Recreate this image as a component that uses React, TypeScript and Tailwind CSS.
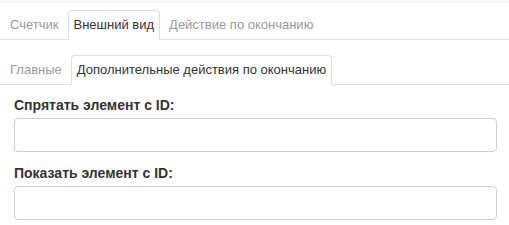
import { useState } from "react";

type Tab = { id: string; label: string };

const mainTabs: Tab[] = [
  { id: "counter", label: "Счетчик" },
  { id: "look", label: "Внешний вид" },
  { id: "finish", label: "Действие по окончанию" },
];

const subTabs: Tab[] = [
  { id: "main", label: "Главные" },
  { id: "extra", label: "Дополнительные действия по окончанию" },
];

function Tabs({
  tabs,
  active,
  onChange,
}: {
  tabs: Tab[];
  active: string;
  onChange: (id: string) => void;
}) {
  return (
    <ul className="flex border-b border-[#ddd] px-[4px]">
      {tabs.map((tab) => (
        <li key={tab.id} className="-mb-px mr-[3px]">
          <button
            type="button"
            onClick={() => onChange(tab.id)}
            className={
              tab.id === active
                ? "flex h-[30px] items-center rounded-t-[4px] border border-[#ddd] border-b-transparent bg-white px-[5px] text-[#333]"
                : "flex h-[30px] items-center rounded-t-[4px] border border-transparent px-[5px] text-[#999]"
            }
          >
            {tab.label}
          </button>
        </li>
      ))}
    </ul>
  );
}

function Field({ label }: { label: string }) {
  return (
    <div>
      <label className="mb-[3px] block text-[14px] leading-[20px] font-bold text-[#333]">
        {label}
      </label>
      <input
        type="text"
        className="block h-[34px] w-full rounded-[4px] border border-[#ccc] bg-white px-3 outline-none"
      />
    </div>
  );
}

export default function App() {
  const [tab, setTab] = useState("look");
  const [subTab, setSubTab] = useState("extra");

  return (
    <div className="mt-px border-t border-[#eee] bg-white font-['Liberation_Sans',Arial,sans-serif] text-[13px] leading-[18px]">
      <div className="pt-2">
        <Tabs tabs={mainTabs} active={tab} onChange={setTab} />
      </div>
      <div className="pt-[15px]">
        <Tabs tabs={subTabs} active={subTab} onChange={setSubTab} />
      </div>
      <div className="flex flex-col gap-[11px] px-[14px] pt-[10px] pr-[12px]">
        <Field label="Спрятать элемент с ID:" />
        <Field label="Показать элемент с ID:" />
      </div>
    </div>
  );
}
